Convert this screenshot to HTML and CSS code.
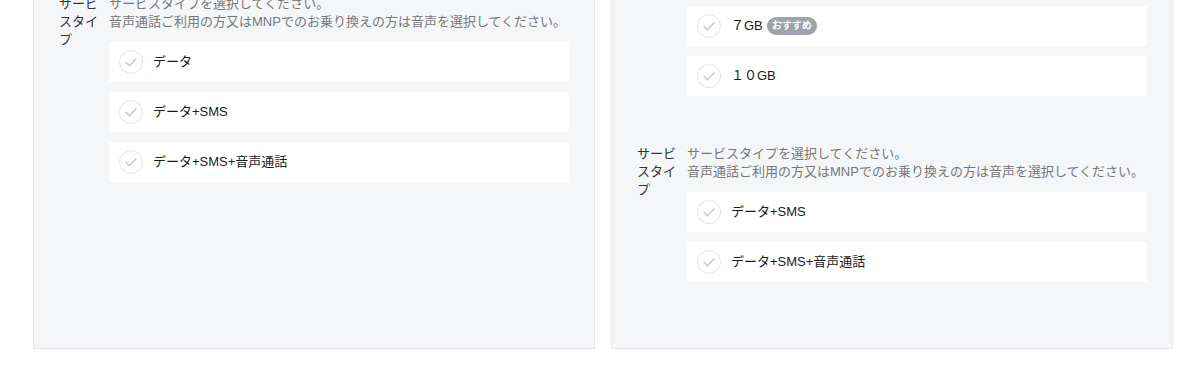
FILE: index.html
```html
<!DOCTYPE html>
<html lang="ja">
<head>
<meta charset="UTF-8">
<meta name="viewport" content="width=device-width, initial-scale=1.0">
<title>プラン選択</title>
<link rel="stylesheet" href="styles.css">
</head>
<body>
<div class="plans">
    <div class="panel">
        <div class="field">
            <div class="field-label">容量</div>
            <div class="field-body">
                <p class="field-desc">データ容量を選択してください。</p>
                <div class="option">
                    <span class="check"><svg width="24" height="24" viewBox="0 0 24 24"><circle cx="12" cy="12" r="11.5" fill="#fff" stroke="#e2e2e2"/><path d="M7 12.3l3.4 3.4 6.6-6.9" fill="none" stroke="#c6c6c6" stroke-width="1.4" stroke-linecap="round" stroke-linejoin="round"/></svg></span>
                    <span class="option-text">３GB</span>
                </div>
            </div>
        </div>
        <div class="field">
            <div class="field-label">サービスタイプ</div>
            <div class="field-body">
                <p class="field-desc">サービスタイプを選択してください。<br>音声通話ご利用の方又はMNPでのお乗り換えの方は音声を選択してください。</p>
                <div class="option">
                    <span class="check"><svg width="24" height="24" viewBox="0 0 24 24"><circle cx="12" cy="12" r="11.5" fill="#fff" stroke="#e2e2e2"/><path d="M7 12.3l3.4 3.4 6.6-6.9" fill="none" stroke="#c6c6c6" stroke-width="1.4" stroke-linecap="round" stroke-linejoin="round"/></svg></span>
                    <span class="option-text">データ</span>
                </div>
                <div class="option">
                    <span class="check"><svg width="24" height="24" viewBox="0 0 24 24"><circle cx="12" cy="12" r="11.5" fill="#fff" stroke="#e2e2e2"/><path d="M7 12.3l3.4 3.4 6.6-6.9" fill="none" stroke="#c6c6c6" stroke-width="1.4" stroke-linecap="round" stroke-linejoin="round"/></svg></span>
                    <span class="option-text">データ+SMS</span>
                </div>
                <div class="option">
                    <span class="check"><svg width="24" height="24" viewBox="0 0 24 24"><circle cx="12" cy="12" r="11.5" fill="#fff" stroke="#e2e2e2"/><path d="M7 12.3l3.4 3.4 6.6-6.9" fill="none" stroke="#c6c6c6" stroke-width="1.4" stroke-linecap="round" stroke-linejoin="round"/></svg></span>
                    <span class="option-text">データ+SMS+音声通話</span>
                </div>
            </div>
        </div>
    </div>
    <div class="panel">
        <div class="field">
            <div class="field-label">容量</div>
            <div class="field-body">
                <p class="field-desc">データ容量を選択してください。</p>
                <div class="option">
                    <span class="check"><svg width="24" height="24" viewBox="0 0 24 24"><circle cx="12" cy="12" r="11.5" fill="#fff" stroke="#e2e2e2"/><path d="M7 12.3l3.4 3.4 6.6-6.9" fill="none" stroke="#c6c6c6" stroke-width="1.4" stroke-linecap="round" stroke-linejoin="round"/></svg></span>
                    <span class="option-text">１GB</span>
                </div>
                <div class="option">
                    <span class="check"><svg width="24" height="24" viewBox="0 0 24 24"><circle cx="12" cy="12" r="11.5" fill="#fff" stroke="#e2e2e2"/><path d="M7 12.3l3.4 3.4 6.6-6.9" fill="none" stroke="#c6c6c6" stroke-width="1.4" stroke-linecap="round" stroke-linejoin="round"/></svg></span>
                    <span class="option-text">３GB</span>
                </div>
                <div class="option">
                    <span class="check"><svg width="24" height="24" viewBox="0 0 24 24"><circle cx="12" cy="12" r="11.5" fill="#fff" stroke="#e2e2e2"/><path d="M7 12.3l3.4 3.4 6.6-6.9" fill="none" stroke="#c6c6c6" stroke-width="1.4" stroke-linecap="round" stroke-linejoin="round"/></svg></span>
                    <span class="option-text">７GB</span>
                    <span class="badge">おすすめ</span>
                </div>
                <div class="option">
                    <span class="check"><svg width="24" height="24" viewBox="0 0 24 24"><circle cx="12" cy="12" r="11.5" fill="#fff" stroke="#e2e2e2"/><path d="M7 12.3l3.4 3.4 6.6-6.9" fill="none" stroke="#c6c6c6" stroke-width="1.4" stroke-linecap="round" stroke-linejoin="round"/></svg></span>
                    <span class="option-text">１０GB</span>
                </div>
            </div>
        </div>
        <div class="field">
            <div class="field-label">サービスタイプ</div>
            <div class="field-body">
                <p class="field-desc">サービスタイプを選択してください。<br>音声通話ご利用の方又はMNPでのお乗り換えの方は音声を選択してください。</p>
                <div class="option">
                    <span class="check"><svg width="24" height="24" viewBox="0 0 24 24"><circle cx="12" cy="12" r="11.5" fill="#fff" stroke="#e2e2e2"/><path d="M7 12.3l3.4 3.4 6.6-6.9" fill="none" stroke="#c6c6c6" stroke-width="1.4" stroke-linecap="round" stroke-linejoin="round"/></svg></span>
                    <span class="option-text">データ+SMS</span>
                </div>
                <div class="option">
                    <span class="check"><svg width="24" height="24" viewBox="0 0 24 24"><circle cx="12" cy="12" r="11.5" fill="#fff" stroke="#e2e2e2"/><path d="M7 12.3l3.4 3.4 6.6-6.9" fill="none" stroke="#c6c6c6" stroke-width="1.4" stroke-linecap="round" stroke-linejoin="round"/></svg></span>
                    <span class="option-text">データ+SMS+音声通話</span>
                </div>
            </div>
        </div>
    </div>
</div>
</body>
</html>
```

FILE: styles.css
```css
body {
    margin: 0;
    font-family: "Liberation Sans", "Noto Sans CJK JP", sans-serif;
    font-size: 13px;
    line-height: 18px;
    color: #1a1a1a;
    background: #fff;
}
.plans {
    display: flex;
    gap: 16px;
    margin-top: -148px;
    padding: 0 19px 0 33px;
}
.panel {
    flex: 1;
    background: #f5f6f8;
    border: 1px solid #e6e8eb;
    padding: 24px 25px 66px 25px;
}
.field {
    display: flex;
}
.field + .field {
    margin-top: 49px;
}
.field-label {
    flex: 0 0 40px;
    margin-right: 10px;
    color: #333;
}
.field-body {
    flex: 1;
}
.field-desc {
    margin: 0 0 11px;
    color: #777;
}
.option {
    display: flex;
    align-items: center;
    height: 40px;
    padding: 0 10px;
    background: #fff;
    border-radius: 3px;
    margin-bottom: 10px;
}
.option:last-child {
    margin-bottom: 0;
}
.check {
    display: flex;
    margin-right: 10px;
}
.badge {
    margin-left: 4px;
    padding: 0 5px;
    height: 18px;
    line-height: 18px;
    border-radius: 9px;
    background: #9ea2aa;
    color: #fff;
    font-size: 10px;
    font-weight: bold;
}
```
